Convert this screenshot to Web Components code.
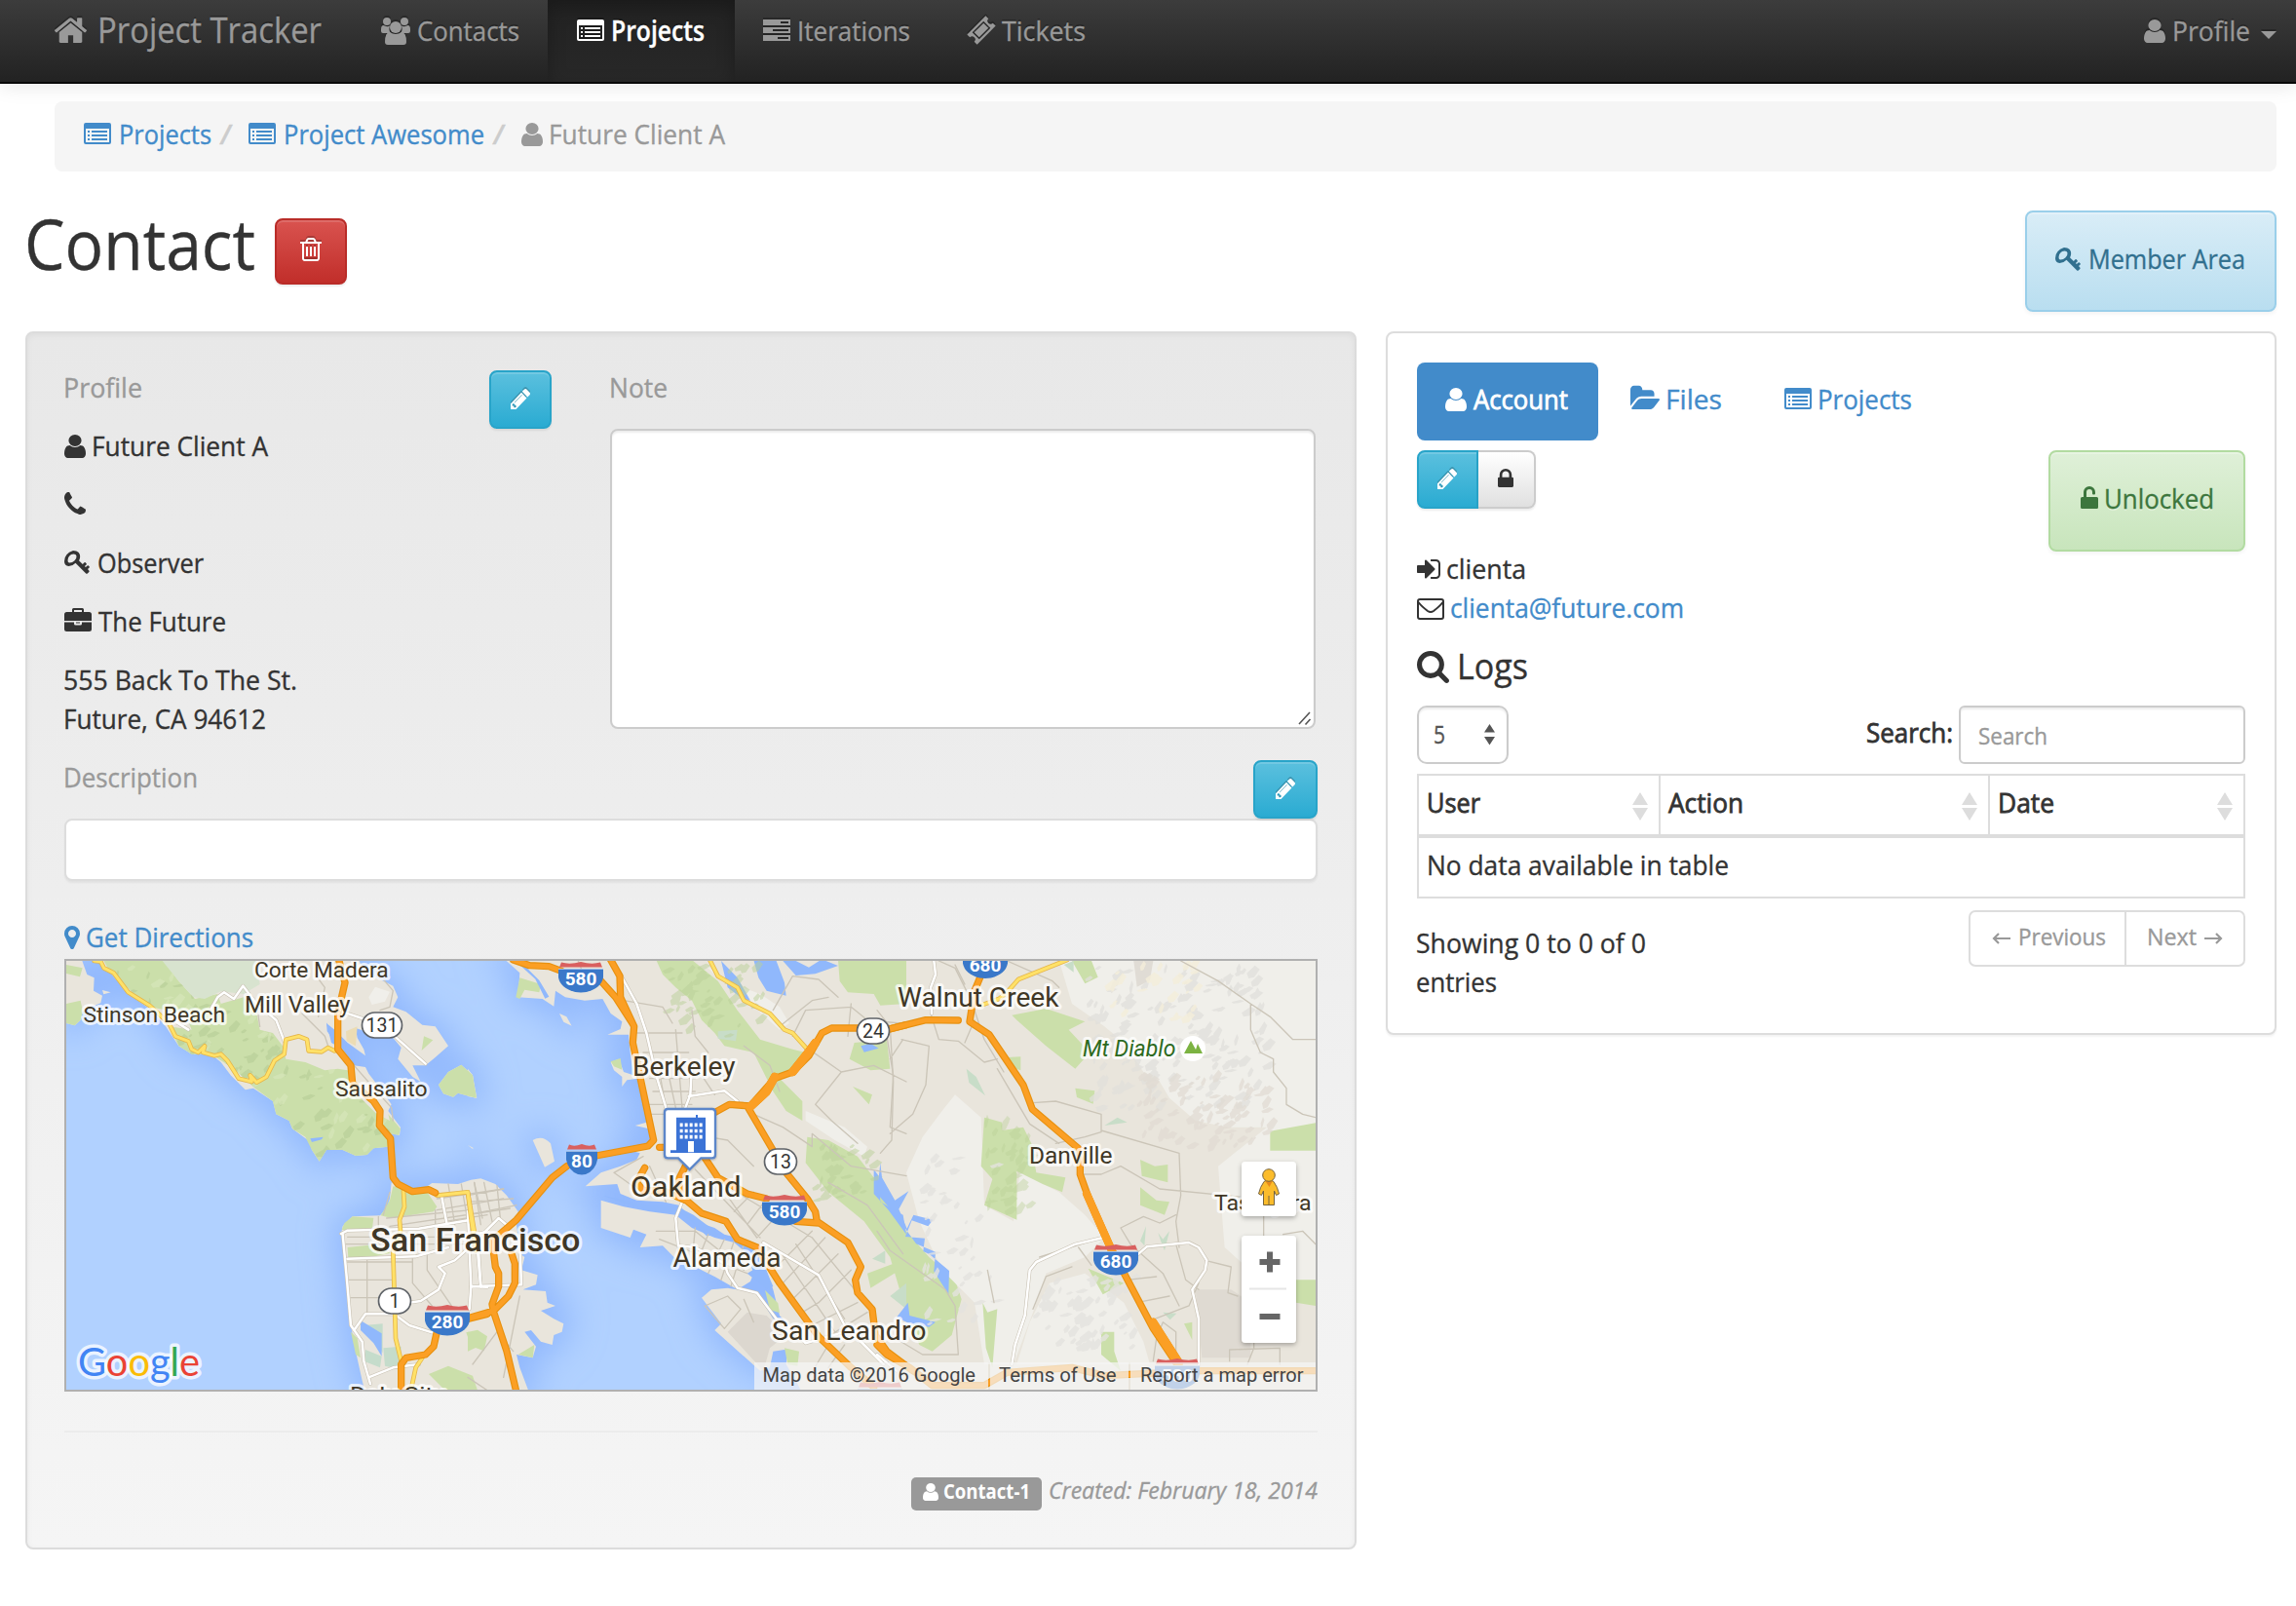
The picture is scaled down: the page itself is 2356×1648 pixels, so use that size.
<!DOCTYPE html>
<html lang="en">
<head>
<meta charset="utf-8">
<title>Project Tracker</title>
<style>
html,body{margin:0;padding:0;background:#fff}
body{width:2356px;height:1648px;overflow:hidden;font:28px/40px "Open Sans","Noto Sans",sans-serif;color:#333}
</style>
</head>
<body>
<contact-page></contact-page>
<script>
const make=(tag,html,init)=>customElements.define(tag,class extends HTMLElement{
  constructor(){super();this.attachShadow({mode:'open'})}
  connectedCallback(){if(!this.shadowRoot.childNodes.length){this.shadowRoot.innerHTML=typeof html==='function'?html(this):html;init&&init(this)}}
});

/* ---------- icons ---------- */
const P=d=>`<path d="${d}"/>`;
const sq=y=>`<rect x="4" y="${y}" width="2" height="2"/><rect x="8" y="${y}" width="16" height="2"/>`;
const ICONS={
 user:['256 128 1280 1536',P('M1536 1399q0 109-62.500 187t-150.500 78h-854q-88 0-150.500-78t-62.500-187q0-85 8.500-160.500t31.500-152 58.500-131 94-89 134.500-34.500q131 128 313 128t313-128q76 0 134.500 34.500t94 89 58.500 131 31.500 152 8.500 160.500zm-256-887q0 159-112.500 271.500t-271.500 112.500-271.500-112.500-112.500-271.500 112.500-271.500 271.500-112.500 271.500 112.500 112.500 271.500z')],
 home:['90 245 1612 1291',P('M1472 992v480q0 26-19 45t-45 19h-384v-384h-256v384h-384q-26 0-45-19t-19-45v-480q0-1 .5-3t.5-3l575-474 575 474q1 2 1 6zm223-69l-62 74q-8 9-21 11h-3q-13 0-21-7l-692-577-692 577q-12 8-24 7-13-2-21-11l-62-74q-8-10-7-23.500t11-21.500l719-599q32-26 76-26t76 26l244 204v-195q0-14 9-23t23-9h192q14 0 23 9t9 23v408l219 182q10 8 11 21.500t-7 23.500z')],
 list:['0 0 28 22','<path fill-rule="evenodd" d="M2 0h24a2 2 0 0 1 2 2v18a2 2 0 0 1-2 2H2a2 2 0 0 1-2-2V2a2 2 0 0 1 2-2zM2 6v13.500q0 .5.5.5h23q.5 0 .5-.5V6z"/>'+sq(8)+sq(12)+sq(16)],
 tasks:['0 0 28 22','<path fill-rule="evenodd" d="M0 0h28v6H0zM18 2v2h8V2zM0 8h28v6H0zM10 10v2h16v-2zM0 16h28v6H0zM15 18v2h11v-2z"/>'],
 group:['0 0 30 28','<circle cx="6" cy="4" r="4"/><circle cx="24" cy="4" r="4"/><path d="M0 16v-4q0-4 2.500-4Q6 10 9 8.500 7.500 13 10 16H2q-2 0-2-2zM30 14q0 2-2 2h-8q2.500-3 1-7.500Q24 10 27.500 8q2.500 0 2.500 4z"/><circle cx="15" cy="10" r="6"/><path d="M4 25q0-10 5-10 6 4 12 0 5 0 5 10 0 3-3 3H7q-3 0-3-3z"/>'],
 ticket:['-13.5 -13.5 27 27','<g transform="rotate(-45)"><path fill-rule="evenodd" d="M-14-7.500h28v4.200a3.300 3.300 0 0 0 0 6.600v4.200h-28v-4.200a3.300 3.300 0 0 0 0-6.600zM-8.500-5.200v10.400h17v-10.400z"/><rect x="-7" y="-3.700" width="14" height="7.400"/></g>'],
 pencil:['128 149 1515 1515',P('M491 1536l91-91-235-235-91 91v107h128v128h107zm523-928q0-22-22-22-10 0-17 7l-542 542q-7 7-7 17 0 22 22 22 10 0 17-7l542-542q7-7 7-17zm-54-192l416 416-832 832h-416v-416zm683 96q0 53-37 90l-166 166-416-416 166-165q36-38 90-38 53 0 91 38l235 234q37 39 37 91z')],
 trash:['192 128 1408 1536',P('M704 736v576q0 14-9 23t-23 9h-64q-14 0-23-9t-9-23v-576q0-14 9-23t23-9h64q14 0 23 9t9 23zM960 736v576q0 14-9 23t-23 9h-64q-14 0-23-9t-9-23v-576q0-14 9-23t23-9h64q14 0 23 9t9 23zM1216 736v576q0 14-9 23t-23 9h-64q-14 0-23-9t-9-23v-576q0-14 9-23t23-9h64q14 0 23 9t9 23zM1344 1460v-948h-896v948q0 22 7 40.500t14.500 27 10.500 8.500h832q3 0 10.500-8.500t14.500-27 7-40.500zm-672-1076h448l-48-117q-7-9-17-11h-317q-10 2-17 11zm928 32v64q0 14-9 23t-23 9h-96v948q0 83-47 143.500t-113 60.500h-832q-66 0-113-58.500t-47-141.500v-952h-96q-14 0-23-9t-9-23v-64q0-14 9-23t23-9h309l70-167q15-37 54-63t79-26h320q40 0 79 26t54 63l70 167h309q14 0 23 9t9 23z')],
 phone:['192 192 1408 1408',P('M1600 1240q0 27-10 70.500t-21 68.500q-21 50-122 106-94 51-186 51-27 0-53-3.500t-57.500-12.500-47-14.500-55.500-20.500-49-18q-98-35-175-83-127-79-264-216t-216-264q-48-77-83-175-3-9-18-49t-20.500-55.500-14.500-47-12.500-57.500-3.500-53q0-92 51-186 56-101 106-122 25-11 68.500-21t70.500-10q14 0 21 3 18 6 53 76 11 19 30 54t35 63.500 31 53.500q3 4 17.500 25t21.500 35.500 7 28.500q0 20-28.500 50t-62 55-62 53-28.500 46q0 9 5 22.500t8.500 20.500 14 24 11.500 19q76 137 174 235t235 174q2 1 19 11.500t24 14 20.500 8.500 22.500 5q18 0 46-28.500t53-62 55-62 50-28.500q14 0 28.500 7t35.500 21.500 25 17.500q25 15 53.500 31t63.500 35 54 30q70 35 76 53 3 7 3 21z')],
 pin:['384 128 1024 1536',P('M1152 640q0-106-75-181t-181-75-181 75-75 181 75 181 181 75 181-75 75-181zm256 0q0 109-33 179l-364 774q-16 33-47.500 52t-67.500 19-67.500-19-46.500-52l-365-774q-33-70-33-179 0-212 150-362t362-150 362 150 150 362z')],
 lock:['320 128 1152 1408',P('M640 768h512v-192q0-106-75-181t-181-75-181 75-75 181v192zm832 96v576q0 40-28 68t-68 28h-960q-40 0-68-28t-28-68v-576q0-40 28-68t68-28h32v-192q0-184 132-316t316-132 316 132 132 316v192h32q40 0 68 28t28 68z')],
 unlock:['0 0 18 24','<path d="M1.500 12H3V7a6 6 0 0 1 12 0v1.500q0 1-1 1h-1q-1 0-1-1V7a3 3 0 0 0-6 0v5h10.500q1.500 0 1.500 1.500v9q0 1.500-1.500 1.500h-15Q0 24 0 22.500v-9Q0 12 1.500 12z"/>'],
 key:['0 0 26 25','<path fill-rule="evenodd" d="M9 0C14 0 17 3 16 7.500q-.3 1.500-1 2.700l3.800 3.800 1.700-1.700q.6-.5 1.200 0l.9.900q.5.600 0 1.200l-1.700 1.700 1 1 1.700-1.700q.6-.5 1.200 0l.8.800q.5.700 0 1.300l-1.600 1.500 1.300 1.500q.7.700 0 1.400l-1.600 1.600q-.7.700-1.500 0L11.500 12.800Q8.500 16 4.500 16 0 15.500 0 11 0 3 9 0zM9.500 3.500Q4 4 3.500 10q0 2.500 1.800 2.500 3 0 5-2Q13 7.500 12.500 5.500 12 3.500 9.500 3.500z"/>'],
 brief:['0 0 28 24','<path fill-rule="evenodd" d="M8 4V1.500Q8 0 9.500 0h9Q20 0 20 1.500V4h5.500Q28 4 28 6.500V13H0V6.500Q0 4 2.500 4zM10 2v2h8V2z"/><path d="M0 14.500h10V16q0 1.500 1.500 1.500h5q1.500 0 1.500-1.500v-1.500h10v7q0 2.500-2.500 2.500h-23Q0 24 0 21.500zM12 14.500h4v1h-4z"/>'],
 folder:['0 256 1879 1280',P('M1879 952q0 31-31 66l-336 396q-43 51-120.500 86.500t-143.500 35.500h-1088q-34 0-60.500-13t-26.500-43q0-31 31-66l336-396q43-51 120.500-86.500t143.500-35.500h1088q34 0 60.500 13t26.500 43zm-343-344v160h-832q-94 0-197 47.500t-164 119.500l-337 396-5 6q0-4-.5-12.500t-.5-12.500v-960q0-92 66-158t158-66h320q92 0 158 66t66 158v32h544q92 0 158 66t66 158z')],
 signin:['128 256 1536 1280',P('M1312 896q0 26-19 45l-544 544q-19 19-45 19t-45-19-19-45v-288h-448q-26 0-45-19t-19-45v-384q0-26 19-45t45-19h448v-288q0-26 19-45t45-19 45 19l544 544q19 19 19 45zm352-352v704q0 119-84.500 203.500t-203.500 84.500h-320q-13 0-22.500-9.500t-9.500-22.500q0-4-1-20t-.5-26.500 3-23.500 10-19.500 20.500-6.500h320q66 0 113-47t47-113v-704q0-66-47-113t-113-47h-312l-11.500-1-11.500-3-8-5.500-7-9-2-13.500q0-4-1-20t-.5-26.500 3-23.500 10-19.500 20.500-6.500h320q119 0 203.500 84.500t84.500 203.500z')],
 mail:['0 0 28 22','<rect x="1" y="1" width="26" height="20" rx="2" fill="none" stroke="currentColor" stroke-width="2"/><path d="M1.500 4q3 4 9.500 9 3 2 6 0 6.500-5 9.500-9" fill="none" stroke="currentColor" stroke-width="2"/>'],
 search:['64 128 1664 1664',P('M1216 832q0-185-131.500-316.500t-316.500-131.500-316.500 131.500-131.500 316.500 131.500 316.500 316.500 131.500 316.500-131.500 131.500-316.500zm512 832q0 52-38 90t-90 38q-54 0-90-38l-343-342q-179 124-399 124-143 0-273.500-55.500t-225-150-150-225-55.500-273.500 55.500-273.500 150-225 225-150 273.500-55.500 273.500 55.500 225 150 150 225 55.500 273.500q0 220-124 399l343 343q37 37 37 90z')],
 caret:['0 0 16 8','<path d="M0 0h16L8 8z"/>'],
 sort:['0 0 16 30','<path d="M8 0l8 13.500H0zM0 16.500h16L8 30z"/>'],
 grip:['0 0 14 14','<path d="M1 13L12 1M7.500 13.500l5-5.500" fill="none" stroke="#555" stroke-width="1.600"/>']
};
make('ui-icon',e=>{const [vb,b]=ICONS[e.getAttribute('name')];return `<style>:host{display:block;flex:none;width:${e.getAttribute('w')}px;height:${e.getAttribute('h')}px;margin-top:${e.getAttribute('t')||0}px;margin-right:${e.getAttribute('r')||0}px}svg{display:block;width:100%;height:100%;overflow:visible;fill:currentColor;filter:var(--ico-shadow,none)}</style><svg viewBox="${vb}" preserveAspectRatio="none">${b}</svg>`});

/* ---------- simple boxes ---------- */
make('ui-line',`<style>:host{display:flex;align-items:flex-start;height:40px;white-space:nowrap}</style><slot></slot>`);
make('ui-button',`<style>
:host{display:flex;flex:none;box-sizing:border-box;border:2px solid;border-radius:8px;align-items:flex-start;box-shadow:inset 0 2px 0 rgba(255,255,255,.15),0 2px 2px rgba(0,0,0,.075)}
:host([kind=info]){background:linear-gradient(#5bc0de,#2aabd2);border-color:#28a4c9;color:#fff;--ico-shadow:drop-shadow(0 -2px 0 rgba(0,0,0,.2))}
:host([kind=danger]){background:linear-gradient(#d9534f,#c12e2a);border-color:#b92c28;color:#fff;--ico-shadow:drop-shadow(0 -2px 0 rgba(0,0,0,.2))}
:host([kind=default]){background:linear-gradient(#fff,#e0e0e0);border-color:#ccc;color:#333}
:host([kind=member]){background:linear-gradient(#d9edf7,#b9def0);border-color:#9acfea;color:#31708f;text-shadow:0 2px 0 rgba(255,255,255,.3);box-shadow:inset 0 2px 0 rgba(255,255,255,.25),0 2px 4px rgba(0,0,0,.05)}
:host([kind=ok]){background:linear-gradient(#dff0d8,#c8e5bc);border-color:#b2dba1;color:#3c763d;text-shadow:0 2px 0 rgba(255,255,255,.3);box-shadow:inset 0 2px 0 rgba(255,255,255,.25),0 2px 4px rgba(0,0,0,.05)}
</style><slot></slot>`);
make('ui-panel',`<style>:host{display:flex;flex-direction:column;box-sizing:border-box;border:2px solid #ddd;border-radius:8px;background:#fff;box-shadow:0 2px 2px rgba(0,0,0,.05)}
:host([well]){background:linear-gradient(#e8e8e8,#f5f5f5);border-color:#dcdcdc;box-shadow:inset 0 2px 6px rgba(0,0,0,.05),0 2px 0 rgba(255,255,255,.1)}</style><slot></slot>`);

/* ---------- navigation ---------- */
make('nav-item',`<style>:host{display:flex;flex:none;box-sizing:border-box;height:84px;padding-top:14px;align-items:flex-start;color:#999}
:host([active]){color:#fff;background:linear-gradient(#222,#282828);box-shadow:inset 0 6px 18px rgba(0,0,0,.25)}</style><slot></slot>`);
make('app-navbar',`<style>:host{display:flex;box-sizing:border-box;height:86px;background:linear-gradient(#3c3c3c,#222);border-bottom:2px solid #080808;box-shadow:0 2px 20px rgba(0,0,0,.1);text-shadow:0 -2px 0 rgba(0,0,0,.25);--ico-shadow:drop-shadow(0 -2px 0 rgba(0,0,0,.25))}
.sp{flex:1}</style>
<nav-item style="width:361px;padding-left:56px;padding-top:13px"><ui-icon name="home" w="33" h="26" t="5" r="12"></ui-icon><fit-text w="229" style="font-size:36px;margin-top:2px">Project Tracker</fit-text></nav-item>
<nav-item style="width:201px;padding-left:30px"><ui-icon name="group" w="30" h="28" t="4" r="8"></ui-icon><fit-text w="104">Contacts</fit-text></nav-item>
<nav-item active style="width:192px;padding-left:30px"><ui-icon name="list" w="28" h="22" t="6" r="8"></ui-icon><fit-text w="95" style="font-weight:600">Projects</fit-text></nav-item>
<nav-item style="width:209px;padding-left:29px"><ui-icon name="tasks" w="28" h="22" t="6" r="8"></ui-icon><fit-text w="115">Iterations</fit-text></nav-item>
<nav-item style="width:180px;padding-left:31px"><ui-icon name="ticket" w="26" h="26" t="4" r="9"></ui-icon><fit-text w="85">Tickets</fit-text></nav-item>
<div class="sp"></div>
<nav-item style="width:186px;padding-left:30px"><ui-icon name="user" w="22" h="24" t="6" r="8"></ui-icon><fit-text w="79">Profile</fit-text><ui-icon name="caret" w="16" h="8" t="18" style="margin-left:11px"></ui-icon></nav-item>`);
make('crumb-bar',`<style>:host{display:flex;align-items:flex-start;margin:18px 20px 0 56px;height:56px;padding:16px 0 0 30px;background:#f5f5f5;border-radius:8px;color:#428bca}
.s{color:#ccc;margin:0 16px 0 9px}.g{display:flex;color:#999}</style>
<ui-icon name="list" w="28" h="22" t="6" r="9"></ui-icon><fit-text w="94">Projects</fit-text><fit-text class="s" w="13">/</fit-text>
<ui-icon name="list" w="28" h="22" t="6" r="9"></ui-icon><fit-text w="205">Project Awesome</fit-text><fit-text class="s" w="13">/</fit-text>
<div class="g"><ui-icon name="user" w="22" h="24" t="6" r="7"></ui-icon><fit-text w="180">Future Client A</fit-text></div>`);
make('page-title',`<style>:host{display:flex;justify-content:space-between;height:124px;padding:40px 20px 0 26px}
.l{display:flex}h1{font-size:72px;font-weight:400;line-height:80px;margin:0 20px 0 0;height:80px}</style>
<div class="l"><h1><fit-text w="236">Contact</fit-text></h1><ui-button kind="danger" style="width:74px;height:68px;margin-top:8px;padding:18px 0 0 24px"><ui-icon name="trash" w="22" h="24"></ui-icon></ui-button></div>
<ui-button kind="member" style="width:258px;height:104px;padding:30px 0 0 29px"><ui-icon name="key" w="26" h="25" t="6" r="9"></ui-icon><fit-text w="160">Member Area</fit-text></ui-button>`);

/* ---------- map ---------- */
const shield=(x,y,t,w=46)=>`<g transform="translate(${x} ${y})"><path d="M${-w/2+1}-10.500 L${-w/2+3}-15.500Q${-w/4}-13 0-16 ${w/4}-13 ${w/2-3}-15.500L${w/2-1}-10.500z" fill="#d9605f"/><path d="M${-w/2}-9H${w/2}V-7H${-w/2}z" fill="#fff"/><path d="M${-w/2}-8.500H${w/2}V0Q${w/2-2} 11 ${w/8} 15L0 15.500 ${-w/8} 15Q${-w/2+2} 11 ${-w/2} 0z" fill="#3a78c9"/><text y="8" text-anchor="middle" fill="#fff" font-size="19" font-weight="700" stroke="none">${t}</text></g>`;
const oval=(x,y,t,w=33)=>`<g transform="translate(${x} ${y})"><rect x="${-w/2}" y="-13" width="${w}" height="26" rx="13" fill="#fff" stroke="#5f6368" stroke-width="1.700"/><text y="6.500" text-anchor="middle" fill="#333" font-size="19.500" stroke="none">${t}</text></g>`;
const lab=(x,x2,y,s,t,a='')=>`<text x="${x-1}" y="${y}" font-size="${s}" textLength="${x2-x+1.5}" lengthAdjust="spacingAndGlyphs" ${a}>${t}</text>`;
const A='<g transform="translate(50 930) scale(.33333)">',B='<g transform="translate(480 970) scale(.33333)">',C='<g transform="translate(900 970) scale(.33333)">',Z='</g>';
const LAND=A+`<path d="M54 168H103L118 210 140 220 138 260 165 275 160 298 130 310 105 325 98 350 80 367 54 360zM165 258l26 7-22 6z"/>
<path d="M150 160L190 205 245 270 310 315 360 370 380 400 400 430 440 455 500 455 530 480 560 520 605 565 630 560 690 600 700 640 740 660 750 685 805 725 810 750 833 785 855 750 905 750 945 768 980 765 1000 745 1045 740 1055 700 1080 705 1083 680 1045 630 1055 610 1020 560 985 515 975 495 940 490 905 440 870 420 855 360 880 380 920 420 975 460 970 440 950 405 945 375 990 390 1060 405 1085 435 1075 470 1120 525 1145 540 1120 490 1160 490 1190 465 1230 430 1190 370 1150 365 1100 325 1060 310 1075 280 1060 245 1010 220 975 200 950 160z"/>
<path d="M1200 550L1230 510 1270 488 1305 520 1315 590 1260 575 1245 587 1215 577zM1290 735l16 8v5z"/>
<path d="M1055 850L1080 862 1150 872 1180 852 1260 855 1300 842 1330 838 1375 855 1410 890 1445 940 1440 980 1452 1070 1465 1080 1455 1120 1505 1135 1500 1165 1460 1180 1530 1185 1535 1220 1560 1230 1515 1245 1555 1270 1585 1285 1580 1310 1555 1320 1550 1350 1515 1340 1485 1305 1465 1310 1500 1355 1490 1390 1440 1380 1450 1420 1480 1500H975L965 1460 945 1370 930 1290 922 1200 912 1080 900 1010 905 985 935 955 1020 952 1040 930 1050 900z"/>`+Z+
B+`<path d="M110 40L160 85 155 160 230 165 265 188 270 140 300 160 360 170 415 165 440 210 475 235 470 258 430 275 495 275 500 330 510 400 480 390 465 350 440 360 450 385 475 405 475 435 490 415 525 410 545 500 550 545 515 555 558 565 570 600 550 612 475 625 530 640 520 660 470 680 410 700 362 742 460 735 470 765 520 785 600 790 650 800 700 850 760 870 790 890 830 900 880 925 905 960 940 1060 960 1140 1040 1220 985 1240 980 1290 1010 1340 1040 1400H2620V40z"/>
<path d="M410 785L410 870 500 900 510 875 550 890 530 930 600 925 640 965 700 990 760 1020 830 1060 870 1035 880 1010 860 950 820 915 760 900 690 870 640 830 560 820 480 805z"/>
<path d="M720 1085L750 1060 800 1055 890 1070 940 1150 1000 1170 1040 1235 940 1250 930 1300 900 1310 760 1185 780 1165zM200 600q30-18 55 10l12 55-30 18zM282 210l22 10 16 28-25-12zM0 380L15 400 28 470 0 465z"/>`+Z;
make('map-view',()=>{
 const mot=(n,x0,y0,w,h,c,o,s)=>{let r='',k=s;const f=()=>(k=(k*16807)%2147483647)/2147483647;for(let i=0;i<n;i++){const x=x0+f()*w,y=y0+f()*h,a=7+f()*22,b=6+f()*20;r+=`M${x|0} ${y|0}l${a|0} ${-b|0} ${a*.6|0} ${b*.5|0} ${-a*.7|0} ${b|0} ${-a*.7|0} ${b*.2|0}z`}return `<path d="${r}" fill="${c}" opacity="${o}"/>`};
 const PARKS=A+`<g fill="#cbdfaa"><path id="mar" d="M165 160H350L400 230 450 285 520 270 530 300 600 280 640 330 650 380 690 390 720 430 730 470 790 480 850 505 890 500 920 505 940 545 960 590 1010 640 1050 660 1045 640 1083 685 1078 705 1055 700 1045 740 1000 745 980 765 945 768 905 750 855 750 833 785 810 750 790 710 750 685 740 660 700 640 690 600 635 560 570 500 500 455 440 455 400 430 370 370 440 380 420 330 310 310 190 205z"/>
<path d="M54 300L98 290 105 325 98 350 80 367 54 360zM54 180l50 10-8 27-42-10zM1200 550L1230 510 1270 488 1305 520 1315 590 1260 575 1245 587 1215 577zM1155 400l28 12-35 32zM1060 862L1140 875 1165 880 1195 925 1185 940 1055 960 1022 952 1050 905zM935 955l65 4-5 40-93-3 8-20zM920 1050l80-8 52 25-55 12-75 5zM930 1310l20 20 10 60-15-10zM1170 1440l60-25 75 30 15 45h-100zM1285 1312l35-8 30 20-10 45-40-15zM488 215l50-33 60 5-60 28-40 10z"/></g>
<path d="M350 168H640L650 240 600 270 530 262 480 285 445 280 400 230z" fill="#d8e3cf"/><path d="M1030 1360l55-5-5 70-45-10zM975 1365l50 20-5 35-50-20zM970 1290l58-5v90z" fill="#c5dccb"/><path d="M960 1275l65 40v70l-25-40-40-40zM805 715l40-5-5 8-30 8zM855 358l22 45 10 22-30-40z" fill="#90b8fc"/><path d="M915 385l35-15-5 60-28-15z" fill="#ecdcb4"/><path d="M985 280l20-32 45 15-15 30-40 10z" fill="#f0efea"/>`+
 '<clipPath id="cm"><use href="#mar"/></clipPath><g clip-path="url(#cm)">'+mot(190,160,170,900,600,'#b5cb93',.55,77)+mot(90,160,170,900,600,'#d9e8bd',.6,991)+'</g>'+Z+
 B+`<g fill="#cbdfaa"><path d="M580 45H690L770 110 830 200 900 290 1000 320 1040 330 1000 390 950 400 1030 480 1030 540 980 510 940 450 880 330 790 310 760 270 720 230 690 170 640 130 600 90zM160 100l65 20-5 25-45-8-15 28-12-5zM440 358l30-10 5 35-25-10zM1045 590L1110 600 1200 650 1300 780 1350 880 1420 960 1500 1030 1520 1090 1490 1200 1430 1250 1390 1230 1350 1130 1300 960 1220 850 1110 760 1040 670zM1140 45H1350V180L1270 185 1250 150 1170 145 1145 110zM1190 300L1290 290 1300 380 1240 385 1175 350zM1185 435l60 25-10 30zM1230 1010l80-30 20 20-90 55zM915 1062l40 40 5 30-30-10zM975 1240l45 10-5 45-30-5zM0 1190l45 5 10 30-55 25zM155 1260l50-30-5 40zM0 385l15 20 12 62-27-4z"/></g>
<path d="M900 150L960 190 990 240 960 260 860 170 770 100 730 60 820 120zM1040 510L1160 560 1230 620 1220 650 1130 600 1040 540z" fill="#f0efea"/>
<path d="M780 48L830 100 870 170 850 168 800 130 790 90zM880 45l15 55 25 40 60 15-5-40-30-80zM970 48l40 45 60-5 70-25-50-20-40 25-40-20zM1210 310l30-8 25 15-45 12zM1250 690l15 20 5 80 70 40 10 60-55-75-45-50zM160 48l60 60 30 50-12 6-30-60-55-50zM415 770l70 25 90 25h70l40 25 50 50 40-5-80-60-50-25-90-5zM860 1010l50-30 30 70-20 10-35-30zM840 1205l38 10-5 35-25-10z" fill="#90b8fc"/><path d="M770 265l60-5-5 35-55-8zM1245 965l40-25v40zM1300 1080l50-40v80z" fill="#c8ddc8"/><path d="M800 1190l60-60 60 10 60 60-50 40-20 70z" fill="#dcd7cf"/>`+mot(50,600,60,300,220,'#b9cf97',.5,5)+mot(35,1060,620,180,180,'#b9cf97',.5,51)+Z+
 C+`<path d="M560 45H1350V570L1200 560 1080 560 980 540 900 470 870 420 820 390 760 300 700 250 600 180zM240 460L320 530 330 800 420 850 440 700 560 760 640 830 700 900 640 960 520 1010 480 1130 420 1290H330L300 1100 200 1000 130 850 90 700 140 590 200 510zM640 1010l120 90 60 120 20 70H430l40-130 60-120zM1200 560h150v500l-180-40-100-90-20-250z" fill="#f0efea"/>
<path d="M980 1060h110l60 40v170h-150zM790 48h60l-10 60-40 20z" fill="#dcd7cf" opacity=".8"/>
<g fill="#cbdfaa"><path d="M415 215L520 195 640 235 590 260 655 330 610 380 520 310 430 230zM330 530L385 545 385 570 450 560 475 610 490 700 580 715 570 760 510 735 430 695 430 845 330 800 355 720 320 680zM1210 572l140-25v85h-140zM1290 1030h60v80l-60-10zM610 440l60 8-5 40-50-20zM810 660l45 20 40-5v55l-80-20zM810 745l50 40 40 5-15 40-75-30zM650 995l110 45-65 35zM690 1190h40v60l20 60-60-50zM325 1100l10 140 20 60 15-180-30 10zM945 1165l25-5v55zM600 48h60l20 50-40 20zM400 345l42-2v42l-30-10z"/></g>
<path d="M10 670l5 45 40 70 42-28-30 55 25 60 20-42 60 15-15 20-50-18-20 50 60 5-5 40 20 10 60 50-2 72-45-70 5-60-60-25-60-85-60-70zM95 1100l5 40 80 20-20 15-60-10-40-20z" fill="#90b8fc"/><path d="M275 380l30 25 28 58-50-40zM700 555l40-25 30 15zM810 910l18-45-5 60zM865 885l15 20 20-25-15 60-10-25zM880 1130l42 3-20 20zM575 60l30-12v35z" fill="#c8ddc8"/>`+mot(170,640,70,560,440,'#e0dfdb',.75,31)+mot(45,130,620,220,560,'#e4e2de',.8,17)+mot(90,800,400,400,230,'#dfdad2',.7,3)+mot(60,480,1020,300,220,'#e4e2de',.8,27)+mot(25,700,60,280,170,'#f4eeda',.8,41)+mot(40,330,540,130,280,'#b9cf97',.4,61)+Z;
 const GR=A+`<path d="M920 1018H1400M915 1040H1300M920 1095H1120M920 1150H1060M930 1205H1050M980 1090V1250M1015 955V1040M1120 1085V1160L1180 1230M1165 1060V1120L1240 1230M1190 935V1060M1230 855L1250 980M1270 855L1290 970M1310 850L1335 960M1195 900L1400 870M1195 935L1400 900M1040 960L1300 935M1050 985L1420 930M1220 970L1350 950M1050 880L1030 950M640 300L650 370M780 330L850 400 860 430M820 210L850 250 830 340M1000 190L1060 260 1050 310 1020 320M940 490L1010 570 1055 620 1060 660"/>`+Z+
 B+`<path d="M0 770L110 750M0 790L140 780M0 830L150 800M20 730L40 860M50 730L75 850M90 740L100 840M160 1080L110 1330M15 1290L90 1190 140 1250M0 1330L60 1370
M340 48L360 100 430 130M480 170L600 190 630 240M520 270H660M540 330H680M560 410H700M570 450H700M560 490H690M590 390L610 500M610 360L640 500M640 260L660 500M690 200L700 280 740 330 720 400 760 460M850 310L930 370 960 450M550 520H620M540 650L450 700 520 750M560 680L610 790M580 880L700 880 850 1000M590 905L860 1010M640 880L650 960M700 870L690 980M740 890L700 990M790 905L740 1010M820 910L780 1030M850 920L810 1050M700 690L900 900M750 700L840 830 890 900M800 740L860 780 1060 900M820 820L880 760M860 860L920 780M890 900L990 790M940 1000L1060 880M970 1040L1100 900M1000 1090L1140 950M1030 1130L1080 1100 1180 1000M1060 1170L1200 1100M1100 1210L1230 1130M960 940L1130 1190M1010 920L1160 1150M1060 900L1240 1120M1110 1230L1050 1330M1160 1230L1110 1300M730 1110L800 1080 840 1120 790 1180zM850 1090L880 1160M940 200L1000 95 1080 105 1140 160M960 250L1060 170 1110 160M1000 280L1040 200 1180 190 1230 230 1330 240M1170 280L1180 180M1050 320L1150 390 1250 370 1350 420M1150 390L1070 490 1120 540 1200 610M1290 280L1310 400 1300 560 1350 580M740 590L800 600 880 680M880 520L970 560 1060 620 1060 580 1180 680 1350 710M1110 730L1230 800 1340 950"/>`+Z+
 C+`<path d="M190 48L240 70 290 170 330 290 390 390M240 60L270 120M400 48L540 110 560 130M75 290L160 310 150 430 110 520 40 580M0 200L40 250 50 420 45 600 10 640M80 290L40 350M165 210L190 290 250 295 330 360 370 350M300 230L270 300M480 485L550 480 690 520V575L640 590 550 610M370 380L470 550 560 610M690 570L930 640 935 770 920 850 930 930M630 705H690L750 680 870 750 1120 775M750 870L820 835 870 855 920 830M750 870L780 920 880 1010 930 1110M690 900L500 960M620 930L660 985M600 990L520 1020 480 1120M935 48L1050 110 1150 180 1150 260 1180 330 1220 350 1220 390 1260 440 1260 490 1310 520 1350 530M1150 180L1210 220 1280 290H1350M800 1100L900 1080M770 1030L860 1020M830 1160L960 1110 990 1040M850 1280L860 1210 880 1160 920 1190 920 1270M1085 1280V1245L1240 1240V1290M1160 1100V1240L1140 1290M920 920L950 1030 990 1060M1010 970L1090 990 1080 1070 1110 1080M1190 820V900M1250 890L1310 880 1350 920M0 880L40 940 210 1060 240 1110 250 1260M40 1200L140 1260H250M340 1000L360 1100"/>`+Z;
 const WH=A+`<path d="M430 380L390 355M500 315L520 280 540 265 570 285 598 245 640 300 700 350 725 415M905 325L965 345M1065 400L1160 485M900 1008L920 998 1140 992 1300 965M920 1085L1130 1078 1230 1050M905 1010L918 1150 930 1290 965 1340 970 1400 990 1470M940 1305L975 1255H1065M985 1450L1060 1420 1140 1410M1070 1260L1110 1290 1180 1312 1200 1290M1210 895L1225 975M1290 940L1300 1170 1350 1172M1320 1060L1330 1172M1300 1170L1295 1240M1110 1220L1145 1215 1200 1180 1220 1130 1200 1110 1250 1090 1300 1045"/>`+Z+B+`<path d="M470 90L520 180 550 270 580 400 610 500M690 370L685 460 670 500M680 465L790 448 830 480M660 790L640 840 648 925 700 930 790 980 800 1010 830 1055 890 1070 950 1150 1000 1180 1040 1225 1160 1190M910 915L1080 1015 1160 1170 1280 1290M160 905L165 1045M10 1050L165 1045M30 890L40 1050M0 890L50 885 95 840 130 870"/>`+Z+C+`<path d="M175 48L180 90 165 130 168 210M695 900L610 920 490 975 470 1000 455 1140 425 1230 415 1290M805 950L830 928 960 915 990 930 1015 970 1010 1000 970 1060 990 1150V1300M0 1260L60 1310"/>`+Z;
 const YE=A+`<path d="M140 168L160 170 170 190 200 205 245 265 310 305 370 360 390 400 430 415 440 440 460 450 480 430 475 450 510 460 530 455 550 475 585 530 625 540 620 520 640 542 670 525 695 475 725 455 730 410 770 400 795 410 800 445 840 448 860 435 880 445M1092 875L1095 925 1080 965 1083 1000 1060 1060 1068 1330 1085 1400M1195 890L1290 880 1300 960 1315 1060M1150 1390L1130 1420 1115 1490"/>`+Z+B+`<path d="M745 45L770 95 830 130 850 170 930 210 975 260 1000 270 1045 320M0 760L20 880"/>`+Z+C+`<path d="M585 45L435 105 400 145 375 165 320 185"/>`+Z;
 const OR=A+`<path d="M893 165L912 235 890 330V440L930 490 935 545 1000 600 1020 630 1018 675 1052 715 1060 835 1075 855 1120 878 1170 872 1190 882M1085 1490V1410L1100 1390 1160 1380 1185 1355 1195 1310M1290 1270L1350 1255"/>`+Z+B+`<path d="M140 45L190 62 250 65 290 80M410 110L455 160 510 245M440 45L468 95 470 160 512 250 508 300 572 600 555 618 395 648M305 680L260 715 150 845 75 910 85 990 95 1010 95 1050 75 1105 80 1130 120 1250 148 1368M135 950L145 980V1040L125 1080 80 1125 0 1148M590 622H620M545 685L520 730 540 755H600L670 785M670 680L650 720 655 770 720 825 795 850 830 905 890 930 960 1040 1080 1205 1180 1300 1250 1360M730 655L770 715 860 765 920 780M760 515L805 490 870 495 945 410 1000 390 1050 340 1090 270 1120 255H1200M1298 258L1350 245M860 495L980 700 1045 780 1070 820 1075 850 1170 915 1210 990 1193 1030 1200 1070 1245 1120 1255 1200 1290 1250 1370 1310M1010 850L1080 855"/><path d="M870 497L920 450 945 405M1000 390L1048 330 1070 300" stroke-width="26"/>`+Z+C+`<path d="M30 260L150 230 250 231M325 80L300 140 285 235 345 275 450 430 478 505 625 630V705L650 775 720 935M750 990L850 1180 920 1285M0 1230L30 1260 100 1300 170 1355 330 1355 400 1315 600 1300 700 1325 1000 1310H1360"/><path d="M645 765L725 945M850 1160L930 1285" stroke-width="24"/>`+Z;
 return `<style>:host{display:block;box-sizing:border-box;width:1286px;height:444px;border:2px solid #b0b0b0}
svg{display:block;width:1282px;height:440px;font-family:Roboto,sans-serif}.r{fill:none;stroke-linejoin:round;stroke-linecap:round}
.t text{paint-order:stroke;stroke:#fff;stroke-opacity:.75;stroke-width:6px;stroke-linejoin:round;fill:#403726}.f text{fill:#444}</style>
<svg viewBox="68 986 1282 440"><defs><filter id="bl" x="-20%" y="-20%" width="140%" height="140%"><feGaussianBlur stdDeviation="17"/></filter><filter id="sh" x="-30%" y="-30%" width="160%" height="160%"><feDropShadow dx="0" dy="2" stdDeviation="2.500" flood-opacity=".3"/></filter></defs>
<rect x="60" y="980" width="1300" height="450" fill="#b1d1ff"/>
<g fill="#91b8fd" stroke="#91b8fd" stroke-width="50" filter="url(#bl)">${LAND}</g><g fill="#e9e5dc">${LAND}</g>
${PARKS}
<g class="r" stroke="#cbc5b8" stroke-width="4">${GR}</g>
<g class="r" stroke="#c9c2b4" stroke-width="11">${WH}</g><g class="r" stroke="#fff" stroke-width="7.500">${WH}</g>
<g class="r" stroke="#e5b64a" stroke-width="14">${YE}</g><g class="r" stroke="#ffe168" stroke-width="9">${YE}</g>
<g class="r" stroke="#e8910f" stroke-width="22">${OR}</g><g class="r" stroke="#fb9f24" stroke-width="15">${OR}</g>
<circle cx="1224" cy="1076" r="13" fill="#fff"/><path d="M1215 1081l7-13 5 9 2-6 5 10z" fill="#7cb342"/>
<g class="t">${lab(262,398,1002.5,22.5,'Corte Madera')}${lab(252,359,1039,24,'Mill Valley')}${lab(86.5,230.500,1048.500,22.500,'Stinson Beach')}${lab(345,438,1125,22.500,'Sausalito')}${lab(381,595,1284,33,'San Francisco','font-weight="500"')}${lab(650,754,1104,28,'Berkeley')}${lab(648,760,1228,30,'Oakland')}${lab(691.500,801,1300,28,'Alameda')}${lab(793,950,1375,28,'San Leandro')}${lab(922,1086,1033,28,'Walnut Creek')}${lab(1112,1206,1084,23,'Mt Diablo','font-style="italic" style="fill:#2d6a1e"')}${lab(1057,1141,1194,24,'Danville')}${lab(1247,1345,1241.500,22.500,'Tassajara')}${lab(360,456,1439,22.500,'Daly City')}
<text x="80" y="1412" font-family="Lato" font-size="41" textLength="125" lengthAdjust="spacingAndGlyphs" style="stroke-width:7px"><tspan fill="#4285f4">G</tspan><tspan fill="#ea4335">o</tspan><tspan fill="#fbbc05">o</tspan><tspan fill="#4285f4">g</tspan><tspan fill="#34a853">l</tspan><tspan fill="#ea4335">e</tspan></text>
<text x="80" y="1412" font-family="Lato" font-size="41" textLength="125" lengthAdjust="spacingAndGlyphs" aria-hidden="true" style="display:none"></text></g>
${shield(596,1003,'580')}${shield(597,1190,'80',32)}${shield(459,1355,'280')}${shield(805,1242,'580')}${shield(1011,988.5,'680')}${shield(1145,1293,'680')}${shield(903,1434,'880')}${shield(1208,1410,'580')}
${oval(392,1052,'131',41)}${oval(896,1058,'24')}${oval(801,1192,'13')}${oval(405,1335,'1')}
${B}<path d="M616 504H752Q762 504 762 514V645Q762 655 752 655H718L683 690 648 655H616Q606 655 606 645V514Q606 504 616 504z" fill="#fff" stroke="#5b86c9" stroke-width="7" filter="url(#sh)"/><path d="M642 530h60v-8h6v8h24v101h18v8H624v-8h18zM678 603v34h18v-34z" fill="#3b73d6" fill-rule="evenodd"/><path d="M653 553H722M653 571.500H722M653 590H722" stroke="#fff" stroke-width="11" stroke-dasharray="9 6"/>${Z}
<g filter="url(#sh)"><rect x="1274" y="1192" width="56" height="56" rx="4" fill="#fff"/><rect x="1274" y="1268" width="56" height="110" rx="4" fill="#fff"/></g>
<path d="M1292.500 1295H1313.500M1303 1284.500V1305.500M1292.500 1351H1313.500" stroke="#666" stroke-width="6"/><path d="M1282 1322.500H1320" stroke="#e6e6e6" stroke-width="2"/>
<path d="M1297 1212.500Q1302 1209 1307 1212.500Q1311 1218 1312.500 1225L1309.500 1226.500 1307.500 1222V1236.500H1296.500V1222L1294.500 1226.500 1291.500 1225Q1293 1218 1297 1212.500zM1302 1227V1236" fill="#fbbc2c" stroke="#76643f" stroke-width="1"/><path d="M1298 1211.500H1306L1302.500 1218z" fill="#e88a1a"/><circle cx="1302" cy="1206" r="6.300" fill="#fbbc2c" stroke="#76643f" stroke-width="1"/>
<path d="M774 1398H1014V1426H774zM1016 1398H1158V1426H1016zM1160 1398H1350V1426H1160z" fill="#f5f5f5" opacity=".72"/>
<g class="f">${lab(783.5,1000.5,1418,20,'Map data ©2016 Google')}${lab(1026,1145,1418,20,'Terms of Use')}${lab(1171,1337,1418,20,'Report a map error')}</g>
</svg>`});

/* ---------- contact details ---------- */
make('contact-card',`<style>:host{display:block}.top{display:flex;height:400px}.prof{width:560px;display:flex}.info{flex:1;display:flex;flex-direction:column}.info>*{margin-bottom:20px}
.note{width:724px}.mut{color:#999}.ta{box-sizing:border-box;margin-top:20px;width:724px;height:308px;border:2px solid #ccc;border-radius:8px;background:#fff;box-shadow:inset 0 2px 2px rgba(0,0,0,.075);display:flex;justify-content:flex-end;align-items:flex-end}
.d{display:flex;justify-content:space-between;height:60px}.in{box-sizing:border-box;height:64px;border:2px solid #ddd;border-radius:8px;background:#fff;box-shadow:0 2px 2px rgba(0,0,0,.05);margin-bottom:40px}
.lnk{color:#428bca}.hr{height:2px;background:#ececec;margin-top:40px}.ft{display:flex;justify-content:flex-end;margin-top:46px}
.tag{box-sizing:border-box;display:flex;width:134px;height:34px;border-radius:5px;background:#999;color:#fff;font:700 21px/32px "Open Sans";padding-left:12px;--bold:0}</style>
<div class="top"><div class="prof"><div class="info">
<ui-line class="mut"><fit-text w="80">Profile</fit-text></ui-line>
<ui-line><ui-icon name="user" w="22" h="24" t="6" r="7"></ui-icon><fit-text w="180">Future Client A</fit-text></ui-line>
<ui-line><ui-icon name="phone" w="22" h="23" t="6"></ui-icon></ui-line>
<ui-line><ui-icon name="key" w="26" h="25" t="5" r="9"></ui-icon><fit-text w="108">Observer</fit-text></ui-line>
<ui-line><ui-icon name="brief" w="28" h="24" t="4" r="8"></ui-icon><fit-text w="130">The Future</fit-text></ui-line>
<div><ui-line><fit-text w="239">555 Back To The St.</fit-text></ui-line><ui-line><fit-text w="207">Future, CA 94612</fit-text></ui-line></div></div>
<ui-button kind="info" style="width:64px;height:60px;margin-right:60px;padding:17px 0 0 20px"><ui-icon name="pencil" w="20" h="21"></ui-icon></ui-button></div>
<div class="note"><ui-line class="mut"><fit-text w="59">Note</fit-text></ui-line><div class="ta"><ui-icon name="grip" w="14" h="14" style="margin:0 2px 2px 0"></ui-icon></div></div></div>
<div class="d"><ui-line class="mut"><fit-text w="137">Description</fit-text></ui-line><ui-button kind="info" style="width:66px;height:60px;padding:17px 0 0 21px"><ui-icon name="pencil" w="20" h="21"></ui-icon></ui-button></div>
<div class="in"></div>
<ui-line class="lnk"><ui-icon name="pin" w="16" h="24" t="6" r="7"></ui-icon><fit-text w="171">Get Directions</fit-text></ui-line>
<map-view></map-view><div class="hr"></div>
<div class="ft"><div class="tag"><ui-icon name="user" w="16" h="18" t="6" r="6"></ui-icon><fit-text w="88">Contact-1</fit-text></div>
<fit-text w="275" style="font-size:24px;font-style:italic;color:#999;line-height:34px;margin:-2px 0 0 8px">Created: February 18, 2014</fit-text></div>`);

/* ---------- account ---------- */
make('account-tabs',`<style>:host{display:flex;height:80px;color:#428bca}div{display:flex;box-sizing:border-box;height:80px;padding-top:20px;flex:none}.a{background:#428bca;color:#fff;border-radius:8px;--bold:.8px}</style>
<div class="a" style="width:186px;padding-left:29px"><ui-icon name="user" w="22" h="24" t="6" r="8"></ui-icon><fit-text w="96">Account</fit-text></div>
<div style="width:158px;padding-left:33px"><ui-icon name="folder" w="30" h="22" t="6" r="7"></ui-icon><fit-text w="57">Files</fit-text></div>
<div style="padding-left:33px"><ui-icon name="list" w="28" h="22" t="6" r="7"></ui-icon><fit-text w="96">Projects</fit-text></div>`);
make('account-status',`<style>:host{display:flex;justify-content:space-between;margin-top:10px;height:104px}.g{display:flex}</style>
<div class="g"><ui-button kind="info" style="width:63px;height:60px;border-radius:8px 0 0 8px;padding:17px 0 0 19px"><ui-icon name="pencil" w="20" h="21"></ui-icon></ui-button><ui-button kind="default" style="width:59px;height:60px;border-left:0;border-radius:0 8px 8px 0;padding:17px 0 0 20px"><ui-icon name="lock" w="16" h="19"></ui-icon></ui-button></div>
<ui-button kind="ok" style="width:202px;height:104px;padding:30px 0 0 31px"><ui-icon name="unlock" w="18" h="24" t="4" r="7"></ui-icon><fit-text w="112">Unlocked</fit-text></ui-button>`);
make('logs-table',`<style>:host{display:block}.bar{display:flex;margin-top:18px;height:60px;justify-content:space-between}
.sel,.inp{box-sizing:border-box;height:60px;border:2px solid #ccc;border-radius:10px;box-shadow:inset 0 2px 2px rgba(0,0,0,.075);display:flex;padding:10px 0 0 16px;width:94px;color:#555;font-size:25px}
.inp{width:294px;border-radius:6px;color:#999;padding:12px 0 0 19px;font-size:24px}.s{display:flex}
.tb{box-sizing:border-box;margin-top:10px;border:2px solid #ddd;height:128px}.h{display:flex;height:60px;border-bottom:4px solid #ddd;--bold:.8px}.c{box-sizing:border-box;display:flex;justify-content:space-between;padding:10px 11px 0 9px;border-right:2px solid #ddd}.c ui-icon{color:#ddd}
.e{padding:10px 0 0 9px}.f{display:flex;justify-content:space-between;margin-top:12px}.p{display:flex;box-sizing:border-box;width:284px;height:58px;border:2px solid #ddd;border-radius:7px;color:#999;font-size:24px}.p div{box-sizing:border-box;display:flex;padding:7px 0 0 22px}
.ar{width:19px;height:12px;margin-top:14px;fill:none;stroke:#999;stroke-width:2.200}</style>
<div class="bar"><div class="sel"><fit-text w="11" style="margin-right:40px;margin-top:-1px">5</fit-text><svg width="11" height="22" viewBox="0 0 11 22" style="margin-top:7px"><path d="M5.500 0L11 8.500H0zM0 13H11L5.500 21.500z" fill="#555"/></svg></div>
<div class="s"><fit-text w="88" style="--bold:.8px;margin:10px 6px 0 0">Search:</fit-text><div class="inp"><fit-text w="70" style="margin-top:-1px">Search</fit-text></div></div></div>
<div class="tb"><div class="h"><div class="c" style="width:248px"><fit-text w="54">User</fit-text><ui-icon name="sort" w="16" h="29" t="7"></ui-icon></div><div class="c" style="width:338px"><fit-text w="76">Action</fit-text><ui-icon name="sort" w="16" h="29" t="7"></ui-icon></div><div class="c" style="width:260px;border:0"><fit-text w="57">Date</fit-text><ui-icon name="sort" w="16" h="29" t="7"></ui-icon></div></div>
<div class="e"><fit-text w="309">No data available in table</fit-text></div></div>
<div class="f"><div style="padding-top:16px"><ui-line><fit-text w="235">Showing 0 to 0 of 0</fit-text></ui-line><ui-line><fit-text w="82">entries</fit-text></ui-line></div>
<div class="p"><div style="width:160px;border-right:2px solid #ddd;flex:none"><svg class="ar" viewBox="0 0 19 12"><path d="M2 6H19M7 1L2 6l5 5"/></svg><fit-text w="89" style="margin-left:9px">Previous</fit-text></div><div><fit-text w="50">Next</fit-text><svg class="ar" viewBox="0 0 19 12" style="margin-left:8px"><path d="M0 6H17M12 1l5 5-5 5"/></svg></div></div></div>`);

make('contact-page',`<style>:host{display:block}main{display:flex;align-items:flex-start;padding:0 20px 0 26px;justify-content:space-between;margin-top:0}
.lk{color:#428bca}.logs{height:40px;margin-top:20px;font-size:36px}</style>
<app-navbar></app-navbar><crumb-bar></crumb-bar><page-title></page-title>
<main><ui-panel well style="width:1366px;height:1250px;padding:38px"><contact-card></contact-card></ui-panel>
<ui-panel style="width:914px;height:722px;padding:30px"><account-tabs></account-tabs><account-status></account-status>
<ui-line><ui-icon name="signin" w="24" h="20" t="8" r="7"></ui-icon><fit-text w="81">clienta</fit-text></ui-line>
<ui-line><ui-icon name="mail" w="28" h="22" t="8" r="7"></ui-icon><fit-text class="lk" w="239">clienta@future.com</fit-text></ui-line>
<ui-line class="logs"><ui-icon name="search" w="33" h="33" t="2" r="9"></ui-icon><fit-text w="72" style="margin-top:2px">Logs</fit-text></ui-line>
<logs-table></logs-table></ui-panel></main>`);

/* Text run squeezed horizontally to a given width */
make('fit-text',e=>`<style>:host{display:block;flex:none;width:${e.getAttribute('w')}px;white-space:nowrap}span{display:inline-block;transform-origin:0 50%;-webkit-text-stroke:var(--bold,.35px) currentColor}</style><span><slot></slot></span>`,
 e=>{const s=e.shadowRoot.querySelector('span');const w=s.getBoundingClientRect().width;s.style.transform=`translate(-1px,-.1em) scaleX(${(+e.getAttribute('w')+1)/w})`});
</script>
</body>
</html>
